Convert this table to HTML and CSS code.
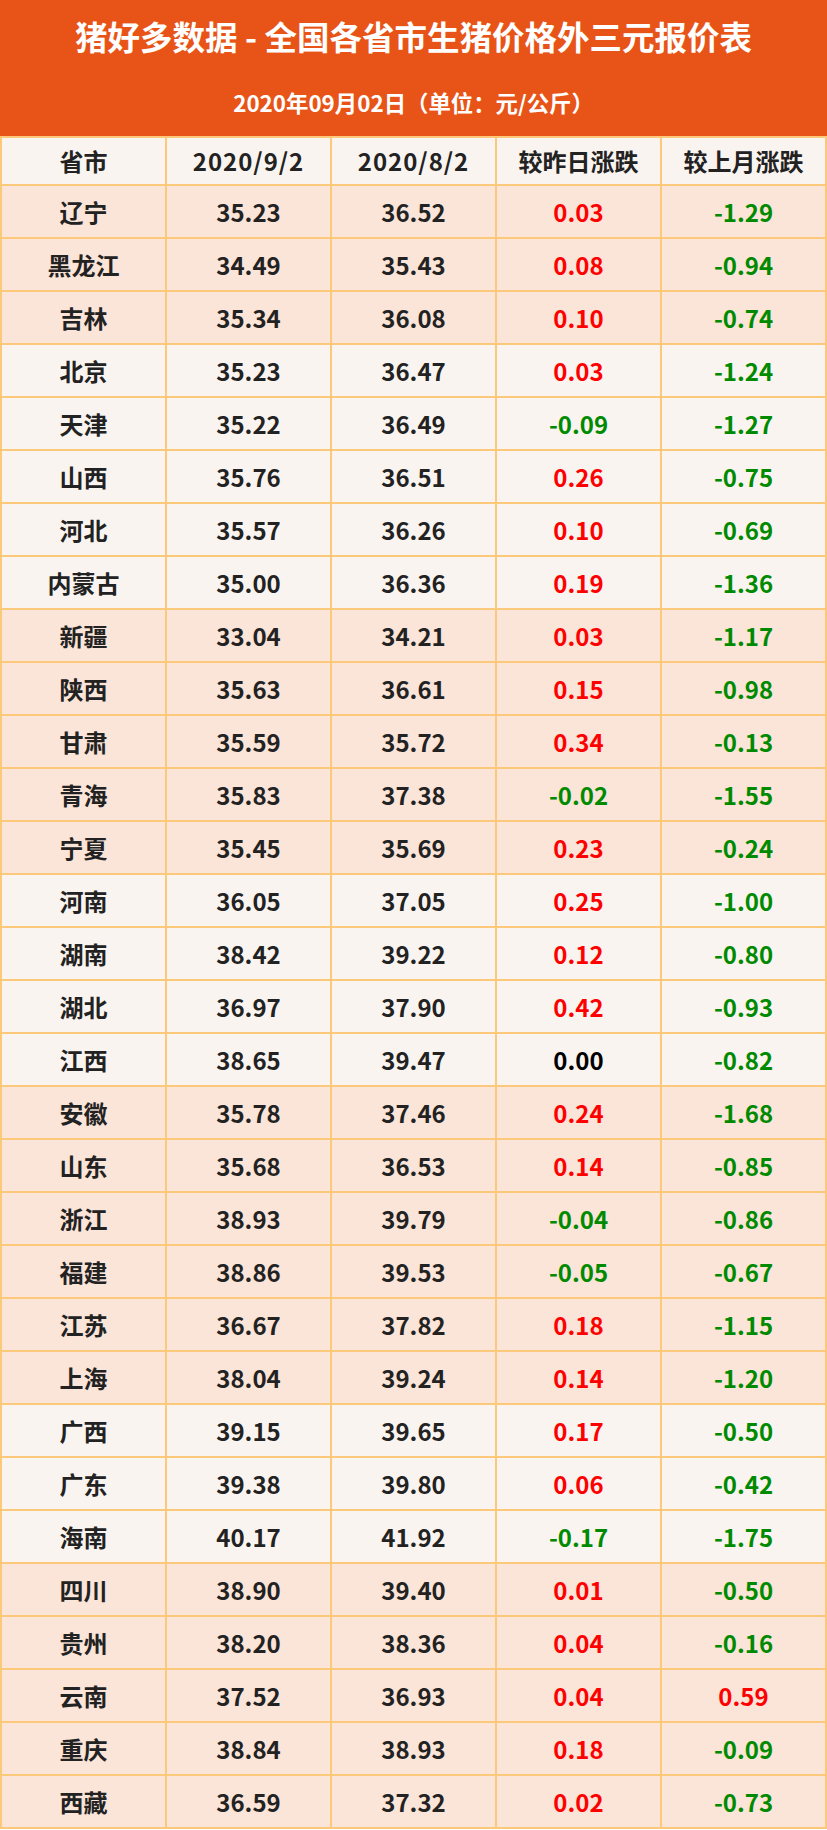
FILE: index.html
```html
<!DOCTYPE html>
<html lang="zh-CN">
<head>
<meta charset="utf-8">
<title>猪好多数据 - 全国各省市生猪价格外三元报价表</title>
<link rel="stylesheet" href="styles.css">
</head>
<body>
<div class="page">
  <header class="banner">
    <h1 class="banner-title">猪好多数据 - 全国各省市生猪价格外三元报价表</h1>
    <p class="banner-sub">2020年09月02日（单位：元/公斤）</p>
  </header>
  <div class="grid">
    <div class="row head"><div class="cell">省市</div><div class="cell date">2020/9/2</div><div class="cell date">2020/8/2</div><div class="cell">较昨日涨跌</div><div class="cell">较上月涨跌</div></div>
    <div class="row peach"><div class="cell">辽宁</div><div class="cell">35.23</div><div class="cell">36.52</div><div class="cell up">0.03</div><div class="cell down">-1.29</div></div>
    <div class="row peach"><div class="cell">黑龙江</div><div class="cell">34.49</div><div class="cell">35.43</div><div class="cell up">0.08</div><div class="cell down">-0.94</div></div>
    <div class="row peach"><div class="cell">吉林</div><div class="cell">35.34</div><div class="cell">36.08</div><div class="cell up">0.10</div><div class="cell down">-0.74</div></div>
    <div class="row light"><div class="cell">北京</div><div class="cell">35.23</div><div class="cell">36.47</div><div class="cell up">0.03</div><div class="cell down">-1.24</div></div>
    <div class="row light"><div class="cell">天津</div><div class="cell">35.22</div><div class="cell">36.49</div><div class="cell down">-0.09</div><div class="cell down">-1.27</div></div>
    <div class="row light"><div class="cell">山西</div><div class="cell">35.76</div><div class="cell">36.51</div><div class="cell up">0.26</div><div class="cell down">-0.75</div></div>
    <div class="row light"><div class="cell">河北</div><div class="cell">35.57</div><div class="cell">36.26</div><div class="cell up">0.10</div><div class="cell down">-0.69</div></div>
    <div class="row light"><div class="cell">内蒙古</div><div class="cell">35.00</div><div class="cell">36.36</div><div class="cell up">0.19</div><div class="cell down">-1.36</div></div>
    <div class="row peach"><div class="cell">新疆</div><div class="cell">33.04</div><div class="cell">34.21</div><div class="cell up">0.03</div><div class="cell down">-1.17</div></div>
    <div class="row peach"><div class="cell">陕西</div><div class="cell">35.63</div><div class="cell">36.61</div><div class="cell up">0.15</div><div class="cell down">-0.98</div></div>
    <div class="row peach"><div class="cell">甘肃</div><div class="cell">35.59</div><div class="cell">35.72</div><div class="cell up">0.34</div><div class="cell down">-0.13</div></div>
    <div class="row peach"><div class="cell">青海</div><div class="cell">35.83</div><div class="cell">37.38</div><div class="cell down">-0.02</div><div class="cell down">-1.55</div></div>
    <div class="row peach"><div class="cell">宁夏</div><div class="cell">35.45</div><div class="cell">35.69</div><div class="cell up">0.23</div><div class="cell down">-0.24</div></div>
    <div class="row light"><div class="cell">河南</div><div class="cell">36.05</div><div class="cell">37.05</div><div class="cell up">0.25</div><div class="cell down">-1.00</div></div>
    <div class="row light"><div class="cell">湖南</div><div class="cell">38.42</div><div class="cell">39.22</div><div class="cell up">0.12</div><div class="cell down">-0.80</div></div>
    <div class="row light"><div class="cell">湖北</div><div class="cell">36.97</div><div class="cell">37.90</div><div class="cell up">0.42</div><div class="cell down">-0.93</div></div>
    <div class="row light"><div class="cell">江西</div><div class="cell">38.65</div><div class="cell">39.47</div><div class="cell flat">0.00</div><div class="cell down">-0.82</div></div>
    <div class="row peach"><div class="cell">安徽</div><div class="cell">35.78</div><div class="cell">37.46</div><div class="cell up">0.24</div><div class="cell down">-1.68</div></div>
    <div class="row peach"><div class="cell">山东</div><div class="cell">35.68</div><div class="cell">36.53</div><div class="cell up">0.14</div><div class="cell down">-0.85</div></div>
    <div class="row peach"><div class="cell">浙江</div><div class="cell">38.93</div><div class="cell">39.79</div><div class="cell down">-0.04</div><div class="cell down">-0.86</div></div>
    <div class="row peach"><div class="cell">福建</div><div class="cell">38.86</div><div class="cell">39.53</div><div class="cell down">-0.05</div><div class="cell down">-0.67</div></div>
    <div class="row peach"><div class="cell">江苏</div><div class="cell">36.67</div><div class="cell">37.82</div><div class="cell up">0.18</div><div class="cell down">-1.15</div></div>
    <div class="row peach"><div class="cell">上海</div><div class="cell">38.04</div><div class="cell">39.24</div><div class="cell up">0.14</div><div class="cell down">-1.20</div></div>
    <div class="row light"><div class="cell">广西</div><div class="cell">39.15</div><div class="cell">39.65</div><div class="cell up">0.17</div><div class="cell down">-0.50</div></div>
    <div class="row light"><div class="cell">广东</div><div class="cell">39.38</div><div class="cell">39.80</div><div class="cell up">0.06</div><div class="cell down">-0.42</div></div>
    <div class="row light"><div class="cell">海南</div><div class="cell">40.17</div><div class="cell">41.92</div><div class="cell down">-0.17</div><div class="cell down">-1.75</div></div>
    <div class="row peach"><div class="cell">四川</div><div class="cell">38.90</div><div class="cell">39.40</div><div class="cell up">0.01</div><div class="cell down">-0.50</div></div>
    <div class="row peach"><div class="cell">贵州</div><div class="cell">38.20</div><div class="cell">38.36</div><div class="cell up">0.04</div><div class="cell down">-0.16</div></div>
    <div class="row peach"><div class="cell">云南</div><div class="cell">37.52</div><div class="cell">36.93</div><div class="cell up">0.04</div><div class="cell up">0.59</div></div>
    <div class="row peach"><div class="cell">重庆</div><div class="cell">38.84</div><div class="cell">38.93</div><div class="cell up">0.18</div><div class="cell down">-0.09</div></div>
    <div class="row peach"><div class="cell">西藏</div><div class="cell">36.59</div><div class="cell">37.32</div><div class="cell up">0.02</div><div class="cell down">-0.73</div></div>
  </div>
</div>
</body>
</html>
```
FILE: styles.css
```css
html, body {
  margin: 0;
  padding: 0;
  background: #ffffff;
}
.page {
  width: 827px;
  font-family: "Noto Sans CJK SC", "Noto Sans", sans-serif;
  font-weight: 700;
}
.banner {
  box-sizing: border-box;
  height: 136px;
  background: #e85418;
  color: #ffffff;
  padding-top: 17px;
  text-align: center;
}
.banner-title {
  margin: 0;
  font-size: 32.5px;
  line-height: 38px;
  font-weight: 700;
}
.banner-sub {
  margin: 34px 0 0;
  font-size: 22.4px;
  line-height: 26px;
  font-weight: 700;
}
.grid {
  border-left: 2px solid #fcc87a;
}
.row {
  display: grid;
  grid-template-columns: repeat(5, 1fr);
  box-sizing: border-box;
  height: 53px;
  border-bottom: 2px solid #fcc87a;
}
.row.head {
  height: 50px;
  border-top: 2px solid #fcc87a;
  background: #faf4f0;
}
.row.peach {
  background: #fbe4d8;
}
.row.light {
  background: #faf4f0;
}
.cell {
  display: flex;
  align-items: center;
  justify-content: center;
  border-right: 2px solid #fcc87a;
  font-size: 24px;
  color: #222222;
  line-height: 1;
}
.cell.date {
  letter-spacing: 1px;
}
.cell.up {
  color: #ff0000;
}
.cell.down {
  color: #008a00;
}
.cell.flat {
  color: #000000;
}
```
